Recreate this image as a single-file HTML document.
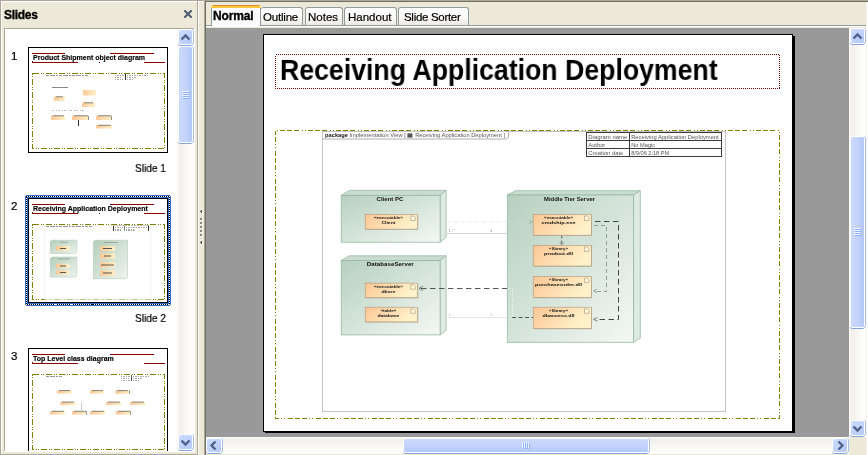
<!DOCTYPE html>
<html>
<head>
<meta charset="utf-8">
<title>Slides</title>
<style>
html,body{margin:0;padding:0;}
body{width:868px;height:455px;position:relative;overflow:hidden;background:#ece9d8;font-family:"Liberation Sans",sans-serif;color:#000;}
.a{position:absolute;}
.t,.tabtxt,.num,.slbl,svg{will-change:transform;}
.t{position:absolute;white-space:nowrap;line-height:1;}
/* scrollbar pieces */
.vtrack{position:absolute;background:linear-gradient(to right,#fefefb 0,#f3f1ec 2px,#f3f1ec 4px,#fefefb 15px,#fefefb 100%);}
.htrack{position:absolute;background:linear-gradient(to bottom,#fefefb 0,#f3f1ec 2px,#f3f1ec 4px,#fefefb 15px,#fefefb 100%);}
.sbtn{position:absolute;width:13px;height:14px;border:1px solid #fff;border-radius:3px;background:linear-gradient(135deg,#cfdcfd 0%,#c2d3fc 45%,#b4c8f7 100%);box-shadow:1px 0 0 #a9bfea,0 1px 0 #84a3da;}
.vthumb{position:absolute;width:13px;border:1px solid #fff;border-radius:3px;background:linear-gradient(to right,#cbd9fc 0%,#c3d3fc 50%,#b3c8f7 100%);box-shadow:1px 0 0 #a9bfea,0 1px 0 #84a3da;}
.hthumb{position:absolute;height:13px;border:1px solid #fff;border-radius:3px;background:linear-gradient(to bottom,#cbd9fc 0%,#c3d3fc 50%,#b3c8f7 100%);box-shadow:1px 0 0 #a9bfea,0 1px 0 #84a3da;}
.tab{position:absolute;top:7px;height:17px;border:1px solid #919b9c;border-bottom:none;border-radius:3px 3px 0 0;background:linear-gradient(to bottom,#ffffff 0%,#fbfbf8 50%,#ecebe5 100%);box-sizing:content-box;}
.tabtxt{position:absolute;white-space:nowrap;line-height:1;font-size:11.5px;top:12px;-webkit-text-stroke:0.2px #000;}
.thumb{position:absolute;width:138px;height:104px;border:1px solid #000;background:#fff;left:28px;}
.num{position:absolute;white-space:nowrap;line-height:1;font-size:11.5px;left:11px;-webkit-text-stroke:0.2px #000;}
.thtitle{font-size:7px;font-weight:bold;letter-spacing:0;-webkit-text-stroke:0.15px #000;}
.slbl{position:absolute;white-space:nowrap;line-height:1;font-size:11.5px;-webkit-text-stroke:0.2px #000;}
</style>
</head>
<body>

<!-- ===== outer frame lines ===== -->
<div class="a" style="left:0;top:0;width:868px;height:1px;background:#aca899"></div>
<div class="a" style="left:0;top:0;width:1px;height:455px;background:#aca899"></div>
<div class="a" style="left:1px;top:1px;width:196px;height:1px;background:#fff"></div>
<div class="a" style="left:1px;top:1px;width:1px;height:453px;background:#fff"></div>
<div class="a" style="left:0;top:454px;width:198px;height:1px;background:#aca899"></div>

<!-- ===== left panel title ===== -->
<div class="t" id="slidesTitle" style="left:4px;top:9px;font-size:12px;font-weight:bold;letter-spacing:-0.3px;-webkit-text-stroke:0.35px #000;">Slides</div>
<svg class="a" style="left:184px;top:10px" width="8" height="8" viewBox="0 0 8 8">
  <path d="M1 1 L7 7 M7 1 L1 7" stroke="#4f5b72" stroke-width="2" stroke-linecap="square" fill="none"/>
</svg>

<!-- ===== slide list box ===== -->
<div class="a" style="left:4px;top:28px;width:191px;height:424px;background:#fff"></div>
<div class="a" style="left:4px;top:28px;width:190px;height:1px;background:#aca899"></div>
<div class="a" style="left:4px;top:28px;width:1px;height:423px;background:#aca899"></div>

<!-- thumbnails -->
<svg class="a" id="leftsvg" style="left:0;top:0" width="177" height="451" viewBox="0 0 177 451">
<defs>
<linearGradient id="og" x1="0" y1="0" x2="1" y2="0"><stop offset="0" stop-color="#fdc896"/><stop offset="1" stop-color="#fff0c8"/></linearGradient>
<linearGradient id="gg" x1="0" y1="0" x2="1" y2="1"><stop offset="0" stop-color="#b4cdbb"/><stop offset="1" stop-color="#eef4ef"/></linearGradient>
</defs>
<rect x="28.5" y="47.5" width="139" height="105" fill="#fff" stroke="#000" shape-rendering="crispEdges"/>
<g stroke="#8b0000" stroke-width="1" shape-rendering="crispEdges"><path d="M32 53.5 H65 M110 53.5 H154 M32 62.5 H78 M144 62.5 H165 M32.5 60.5 V62.5 M99 62.5 H100"/></g>
<rect x="32.5" y="73.5" width="132" height="75" fill="none" stroke="#808000" stroke-dasharray="6 2 1 1 1 2" shape-rendering="crispEdges"/>
<g fill="none" shape-rendering="crispEdges"><path d="M125.5 74 V80" stroke="#333"/><path d="M115 75.5 H124 M127 75.5 H148 M115 77.5 H122 M127 77.5 H136 M115 79.5 H123 M127 79.5 H134" stroke="#aaa" stroke-dasharray="1 1 2 1"/></g>
<path d="M46 75.5 H88" stroke="#999" stroke-width="1" stroke-dasharray="3 1 5 1 2 1"/>
<rect x="83" y="90" width="13" height="5.5" fill="url(#og)"/>
<rect x="54" y="96.5" width="11" height="4.5" fill="url(#og)"/>
<rect x="82" y="102.5" width="13" height="4.5" fill="url(#og)"/>
<rect x="51" y="115.5" width="14" height="4.5" fill="url(#og)"/>
<rect x="72" y="115.5" width="17" height="4.5" fill="url(#og)"/>
<rect x="96" y="115.5" width="16" height="4.5" fill="url(#og)"/>
<rect x="96" y="125" width="16" height="3.5" fill="url(#og)"/>
<g stroke="#444" stroke-width="0.7"><path d="M52 87.5 H68 M53 115.8 H64 M74 115.8 H88 M98 115.8 H111 M98 125.3 H111 M56 96.8 H63 M84 102.8 H93" stroke="#555"/><path d="M78.5 120 V126" stroke="#333" stroke-width="1"/><path d="M88.5 116 V120 M111.5 116 V120" stroke="#666"/></g>
<path d="M52 110.5 H84" stroke="#bbb" stroke-width="1" stroke-dasharray="2 2 1 1"/>
<rect x="25.5" y="195.5" width="145" height="110" rx="2" fill="none" stroke="#316ac5" shape-rendering="crispEdges"/>
<rect x="26.5" y="196.5" width="143" height="108" fill="none" stroke="#000" shape-rendering="crispEdges"/>
<rect x="26.5" y="196.5" width="143" height="108" fill="none" stroke="#fff" stroke-dasharray="1 1" shape-rendering="crispEdges"/>
<rect x="27.5" y="197.5" width="141" height="106" fill="none" stroke="#316ac5" shape-rendering="crispEdges"/>
<rect x="28.5" y="198.5" width="139" height="104" fill="#fff" stroke="#000" shape-rendering="crispEdges"/>
<g stroke="#8b0000" stroke-width="1" shape-rendering="crispEdges"><path d="M32 204.5 H65 M110 204.5 H154 M32 213.5 H78 M144 213.5 H165 M32.5 211.5 V213.5 M99 213.5 H100"/></g>
<rect x="32.5" y="224.5" width="132" height="75" fill="none" stroke="#808000" stroke-dasharray="6 2 1 1 1 2" shape-rendering="crispEdges"/>
<g fill="none" shape-rendering="crispEdges"><path d="M113.5 225 V231 M148.5 225 V231" stroke="#333"/><path d="M124.5 225 V231" stroke="#888"/><path d="M113 225.5 H149" stroke="#777" stroke-dasharray="2 1"/><path d="M115 227.5 H123 M126 227.5 H147 M115 229.5 H121 M126 229.5 H134 M115 230.5 H122 M126 230.5 H136" stroke="#aaa" stroke-dasharray="1 1 2 1"/></g>
<path d="M46 226.5 H92" stroke="#999" stroke-width="1" stroke-dasharray="3 1 5 1 2 1"/>
<rect x="44.5" y="225.5" width="106.5" height="74" fill="none" stroke="#eee" stroke-width="0.6"/>
<path d="M50.3 241.5 L52.3 240.2 H76.8 V252.1 L74.8 253.4 H50.3 Z" fill="url(#gg)" stroke="#a9c3b1" stroke-width="0.5"/>
<path d="M50.3 258.3 L52.3 257 H76.8 V275.8 L74.8 277.1 H50.3 Z" fill="url(#gg)" stroke="#a9c3b1" stroke-width="0.5"/>
<path d="M93.4 241.5 L95.4 240.2 H127.6 V277.4 L125.6 278.7 H93.4 Z" fill="url(#gg)" stroke="#a9c3b1" stroke-width="0.5"/>
<rect x="56" y="246" width="13.7" height="4.6" fill="url(#og)"/>
<rect x="56" y="263.7" width="13.7" height="4.2" fill="url(#og)"/>
<rect x="56" y="270.2" width="13.7" height="4.2" fill="url(#og)"/>
<rect x="99.9" y="246" width="15.4" height="5" fill="url(#og)"/>
<rect x="99.9" y="253.4" width="15.4" height="5.4" fill="url(#og)"/>
<rect x="99.9" y="262" width="15.4" height="5.6" fill="url(#og)"/>
<rect x="99.9" y="270.2" width="15.4" height="5.6" fill="url(#og)"/>
<g stroke="#333" stroke-width="0.8"><path d="M60 248.5 H66 M60 266 H66 M60 272.5 H66 M103 248.5 H112 M104 256 H111 M101 265 H114 M103 273 H112"/></g>
<g stroke="#777" stroke-width="0.5"><path d="M60 242.3 H68 M58 259 H70 M104 242.5 H118"/></g>
<rect x="28.5" y="348.5" width="139" height="105" fill="#fff" stroke="#000" shape-rendering="crispEdges"/>
<g stroke="#8b0000" stroke-width="1" shape-rendering="crispEdges"><path d="M32 354.5 H65 M110 354.5 H154 M32 363.5 H78 M144 363.5 H165 M32.5 361.5 V363.5 M99 363.5 H100"/></g>
<rect x="32.5" y="374.5" width="132" height="75" fill="none" stroke="#808000" stroke-dasharray="6 2 1 1 1 2" shape-rendering="crispEdges"/>
<g fill="none" shape-rendering="crispEdges"><path d="M131.5 375 V381" stroke="#555"/><path d="M121 376.5 H130 M133 376.5 H149 M121 378.5 H129 M133 378.5 H142 M121 380.5 H130 M133 380.5 H140" stroke="#aaa" stroke-dasharray="1 1 2 1"/></g>
<path d="M46 376.5 H62" stroke="#999" stroke-width="1" stroke-dasharray="3 1 5 1 2 1"/>
<rect x="57.2" y="390.4" width="14.8" height="3.2" fill="url(#og)"/>
<rect x="90" y="390.4" width="14.5" height="3.2" fill="url(#og)"/>
<rect x="115.3" y="390.4" width="14.6" height="3.4" fill="url(#og)"/>
<rect x="60.4" y="401.9" width="15.3" height="3.2" fill="url(#og)"/>
<rect x="106.1" y="401.9" width="15" height="3.2" fill="url(#og)"/>
<rect x="129.9" y="401.9" width="15.4" height="3.2" fill="url(#og)"/>
<rect x="50" y="411.1" width="15" height="3.5" fill="url(#og)"/>
<rect x="72" y="411.1" width="14.7" height="3.5" fill="url(#og)"/>
<rect x="90" y="411.1" width="15.4" height="3.5" fill="url(#og)"/>
<rect x="115.8" y="411.1" width="15" height="3.5" fill="url(#og)"/>
<g stroke="#555" stroke-width="0.7"><path d="M59 390.6 H70 M92 390.6 H103 M117 390.6 H128 M62 402.1 H74 M108 402.1 H120 M132 402.1 H144 M52 411.3 H64 M74 411.3 H86 M92 411.3 H104 M118 411.3 H130"/><path d="M81.5 402 V412" stroke="#bbb"/><path d="M86.5 411 V415 M129.5 390 V394 M130.5 411 V415" stroke="#777"/></g>
</svg>
<div class="num" style="top:51px">1</div>
<div class="num" style="top:201px">2</div>
<div class="num" style="top:351px">3</div>
<div class="slbl" id="sl1" style="left:135px;top:163px;transform:scaleX(0.88);transform-origin:0 0">Slide 1</div>
<div class="slbl" id="sl2" style="left:135px;top:313px;transform:scaleX(0.88);transform-origin:0 0">Slide 2</div>
<div class="t thtitle" id="th1" style="left:32.5px;top:54px;">Product Shipment object diagram</div>
<div class="t thtitle" id="th2" style="left:32.5px;top:205px;">Receiving Application Deployment</div>
<div class="t thtitle" id="th3" style="left:32.5px;top:355px;">Top Level class diagram</div>

<!-- left scrollbar -->
<div class="vtrack" style="left:177px;top:29px;width:17px;height:422px"></div>
<div class="sbtn" style="left:178px;top:29px;"></div>
<div class="vthumb" style="left:178px;top:46px;height:95px"></div>
<div class="sbtn" style="left:178px;top:434px;"></div>
<svg class="a" style="left:177px;top:29px" width="17" height="422" viewBox="0 0 17 422">
  <path d="M4.5 10.5 L8.5 6.5 L12.5 10.5" stroke="#4d6185" stroke-width="2.3" fill="none"/>
  <path d="M4.5 411.5 L8.5 415.5 L12.5 411.5" stroke="#4d6185" stroke-width="2.3" fill="none"/>
  <g shape-rendering="crispEdges">
    <rect x="5" y="62" width="7" height="1" fill="#f0f4fe"/><rect x="6" y="63" width="7" height="1" fill="#8cb0f8"/>
    <rect x="5" y="64" width="7" height="1" fill="#f0f4fe"/><rect x="6" y="65" width="7" height="1" fill="#8cb0f8"/>
    <rect x="5" y="66" width="7" height="1" fill="#f0f4fe"/><rect x="6" y="67" width="7" height="1" fill="#8cb0f8"/>
    <rect x="5" y="68" width="7" height="1" fill="#f0f4fe"/><rect x="6" y="69" width="7" height="1" fill="#8cb0f8"/>
  </g>
</svg>

<!-- ===== splitter ===== -->
<div class="a" style="left:197px;top:1px;width:1px;height:454px;background:#aca899"></div>
<div class="a" style="left:198px;top:1px;width:1px;height:454px;background:#fff"></div>
<div class="a" style="left:198px;top:1px;width:6px;height:1px;background:#fff"></div>
<div class="a" style="left:204px;top:1px;width:1px;height:454px;background:#aca899"></div>
<div class="a" style="left:205px;top:1px;width:1px;height:454px;background:#716f64"></div>
<div class="a" style="left:205px;top:1px;width:663px;height:1px;background:#716f64"></div>

<svg class="a" style="left:199px;top:205px" width="5" height="44" viewBox="199 205 5 44" shape-rendering="crispEdges">
<rect x="201" y="219" width="2" height="2" fill="#fff"/><rect x="200" y="218" width="2" height="2" fill="#8a887b"/>
<rect x="201" y="223" width="2" height="2" fill="#fff"/><rect x="200" y="222" width="2" height="2" fill="#8a887b"/>
<rect x="201" y="227" width="2" height="2" fill="#fff"/><rect x="200" y="226" width="2" height="2" fill="#8a887b"/>
<rect x="201" y="231" width="2" height="2" fill="#fff"/><rect x="200" y="230" width="2" height="2" fill="#8a887b"/>
<rect x="201" y="235" width="2" height="2" fill="#fff"/><rect x="200" y="234" width="2" height="2" fill="#8a887b"/>
<rect x="202" y="211" width="1" height="3" fill="#fff"/><rect x="200" y="211" width="1" height="1" fill="#555"/><rect x="201" y="210" width="1" height="3" fill="#555"/>
<rect x="202" y="242" width="1" height="3" fill="#fff"/><rect x="200" y="242" width="1" height="1" fill="#555"/><rect x="201" y="241" width="1" height="3" fill="#555"/>
</svg>
<!-- ===== main: tab row lines ===== -->
<div class="a" style="left:206px;top:25px;width:660px;height:1px;background:#919b9c"></div>
<div class="a" style="left:206px;top:26px;width:660px;height:1px;background:#fff"></div>
<!-- workspace -->
<div class="a" style="left:206px;top:28px;width:643px;height:409px;background:#999999"></div>
<!-- right edge -->
<div class="a" style="left:866px;top:2px;width:1px;height:453px;background:#f6f4ec"></div>
<div class="a" style="left:867px;top:2px;width:1px;height:453px;background:#fff"></div>


<!-- ===== tabs ===== -->
<div class="a" id="tabNormal" style="left:211px;top:5px;width:50px;height:21px;background:#fcfcfe;border-radius:3px 3px 0 0;overflow:hidden">
  <div class="a" style="left:0;top:0;width:50px;height:1px;background:#e68b2c"></div>
  <div class="a" style="left:0;top:1px;width:50px;height:2px;background:#ffc73c"></div>
  <div class="a" style="left:0;top:3px;width:1px;height:18px;background:#919b9c"></div>
  <div class="a" style="left:49px;top:3px;width:1px;height:18px;background:#919b9c"></div>
</div>
<div class="tabtxt" id="tNormal" style="left:213px;top:10px;font-size:12px;font-weight:bold;letter-spacing:-0.15px;-webkit-text-stroke:0.35px #000;">Normal</div>
<div class="tab" style="left:261px;width:41px;border-left:none;"></div>
<div class="tabtxt" id="tOutline" style="left:262.5px;letter-spacing:-0.2px;">Outline</div>
<div class="tab" style="left:305px;width:36px;"></div>
<div class="tabtxt" id="tNotes" style="left:308px;">Notes</div>
<div class="tab" style="left:344px;width:51px;"></div>
<div class="tabtxt" id="tHandout" style="left:348px;">Handout</div>
<div class="tab" style="left:398px;width:69px;"></div>
<div class="tabtxt" id="tSorter" style="left:404px;letter-spacing:-0.3px;">Slide Sorter</div>

<!-- ===== slide page ===== -->
<div class="a" style="left:265px;top:36px;width:530px;height:397px;background:#000"></div>
<div class="a" style="left:263px;top:34px;width:530px;height:398px;background:#000"></div>
<div class="a" style="left:264px;top:35px;width:528px;height:396px;background:#fff"></div>

<!-- title -->
<div class="t" id="bigTitle" style="left:279.8px;top:56px;font-size:28px;font-weight:bold;transform:scale(0.9525,1.045);transform-origin:0 0;">Receiving Application Deployment</div>

<!-- main vector overlay -->
<svg class="a" id="mainsvg" style="left:0;top:0" width="868" height="455" viewBox="0 0 868 455">
  <g shape-rendering="crispEdges" fill="none">
    <rect x="275.5" y="54.5" width="504" height="34" stroke="#800000" stroke-dasharray="1 1"/>
    <rect x="275.5" y="130.5" width="504" height="288" stroke="#808000" stroke-dasharray="5 2 5 2 5 3 1 2 1 2" stroke-dashoffset="23.5"/>
    <rect x="322.5" y="131.5" width="403" height="280" stroke="#c4c4c4"/>
  </g>
<g id="diagram">
<defs>
<linearGradient id="ng" x1="0" y1="0" x2="1" y2="1"><stop offset="0" stop-color="#b7d0be"/><stop offset="0.45" stop-color="#d2e2d7"/><stop offset="1" stop-color="#f4f8f5"/></linearGradient>
<linearGradient id="ag" x1="0" y1="0" x2="1" y2="0.35"><stop offset="0" stop-color="#fdc693"/><stop offset="1" stop-color="#fff2cb"/></linearGradient>
</defs>
<path d="M322.5 139 H506.5 L508.5 137 V131.5" fill="none" stroke="#999" stroke-width="0.8"/>
<text x="325" y="137.2" font-size="5.6" fill="#555" textLength="180" lengthAdjust="spacingAndGlyphs"><tspan font-weight="bold" fill="#111">package</tspan> Implementation View [ <tspan fill="#000">&#9638;</tspan> Receiving Application Deployment ]</text>
<g fill="none" stroke="#3a3a3a" stroke-width="1" shape-rendering="crispEdges"><rect x="586.5" y="132.5" width="135" height="24"/><path d="M586.5 140.5 H721.5 M586.5 148.5 H721.5 M629.5 132.5 V156.5"/></g>
<g font-size="5.5" fill="#555"><text x="588.3" y="138.5" textLength="39" lengthAdjust="spacingAndGlyphs">Diagram name</text><text x="631.2" y="138.5" textLength="87.5" lengthAdjust="spacingAndGlyphs">Receiving Application Deployment</text><text x="588.3" y="146.5" textLength="17" lengthAdjust="spacingAndGlyphs">Author</text><text x="631.2" y="146.5" textLength="24" lengthAdjust="spacingAndGlyphs">No Magic</text><text x="588.3" y="154.5" textLength="35" lengthAdjust="spacingAndGlyphs">Creation date</text><text x="631.2" y="154.5" textLength="38" lengthAdjust="spacingAndGlyphs">8/9/06 2:18 PM</text></g>
<path d="M341.2 195.4 L349.2 190.4 H446.1 L440.1 195.4 Z" fill="#c9dccf" stroke="#98b8a4" stroke-width="0.8"/><path d="M440.1 195.4 L446.1 190.4 V237.2 L440.1 242.2 Z" fill="#dfebe2" stroke="#98b8a4" stroke-width="0.8"/><rect x="341.2" y="195.4" width="98.9" height="46.8" fill="url(#ng)" stroke="#98b8a4" stroke-width="0.8"/>
<path d="M341.2 260.5 L349.2 255.8 H446.1 L440.1 260.5 Z" fill="#c9dccf" stroke="#98b8a4" stroke-width="0.8"/><path d="M440.1 260.5 L446.1 255.8 V330.2 L440.1 334.9 Z" fill="#dfebe2" stroke="#98b8a4" stroke-width="0.8"/><rect x="341.2" y="260.5" width="98.9" height="74.4" fill="url(#ng)" stroke="#98b8a4" stroke-width="0.8"/>
<path d="M507.3 195 L516.0 190.7 H640.3 L633.6 195 Z" fill="#c9dccf" stroke="#98b8a4" stroke-width="0.8"/><path d="M633.6 195 L640.3 190.7 V338.0 L633.6 342.3 Z" fill="#dfebe2" stroke="#98b8a4" stroke-width="0.8"/><rect x="507.3" y="195" width="126.3" height="147.3" fill="url(#ng)" stroke="#98b8a4" stroke-width="0.8"/>
<text x="376.5" y="200.8" font-size="5.4" textLength="27" lengthAdjust="spacingAndGlyphs" fill="#111" font-weight="bold">Client PC</text>
<text x="366.8" y="266" font-size="5.6" textLength="47" lengthAdjust="spacingAndGlyphs" fill="#111" font-weight="bold">DatabaseServer</text>
<text x="544.0" y="201" font-size="5.4" textLength="51" lengthAdjust="spacingAndGlyphs" fill="#111" font-weight="bold">Middle Tier Server</text>
<g fill="none" stroke-width="1"><path d="M446.5 233.5 H507" stroke="#d4d4d4"/><path d="M446.5 317.5 H507" stroke="#e6e6e6"/><path d="M418 222 H440 M507.5 222 H532" stroke="#fff" stroke-opacity="0.22" stroke-dasharray="4 3"/><path d="M447 222 H507" stroke="#eeeeee" stroke-dasharray="4 3"/><path d="M421 288.5 H507.5" stroke="#555" stroke-dasharray="5.5 3.5"/><path d="M507.5 288.5 H512.5 V317.5" stroke="#fff" stroke-opacity="0.5" stroke-dasharray="3 2"/><path d="M512 317.5 H533" stroke="#555" stroke-dasharray="4 2.5"/><path d="M595 221.5 H618.5 V319.5 H596" stroke="#444" stroke-dasharray="5.5 3.5"/><path d="M594 225.5 H606.5 V291.5 H596" stroke="#999" stroke-dasharray="4 3"/><path d="M561.7 235.5 V244" stroke="#666" stroke-dasharray="3 2"/></g>
<g fill="none" stroke="#555" stroke-width="0.7"><path d="M423 286.3 L419 288.4 L423 290.5"/><path d="M597.5 317.5 L593.5 319.3 L597.5 321.1"/><path d="M597 289.3 L593.5 291 L597 292.7" stroke="#888"/><path d="M559.8 242 L561.7 245 L563.6 242" stroke="#777"/><path d="M529 220.5 L532.5 222 L529 223.5" stroke="#9a9"/></g>
<g font-size="4" fill="#888"><text x="448.5" y="232">1..*</text><text x="490" y="232">1</text><text x="448.5" y="316" fill="#bbb">1</text><text x="490" y="316" fill="#bbb">1</text></g>
<rect x="365.9" y="215.1" width="52.4" height="14.7" fill="#a89880" opacity="0.6"/><rect x="365.2" y="214.4" width="52.4" height="14.7" fill="url(#ag)" stroke="#ab957c" stroke-width="0.6"/><path d="M410.8 216.0 h3 l1.5 1.5 v3 h-4.5 Z" fill="#fff6d8" stroke="#8f8570" stroke-width="0.5"/>
<text x="373.9" y="219.0" font-size="4.2" textLength="29" lengthAdjust="spacingAndGlyphs" fill="#1a1a1a" font-weight="bold">&#171;executable&#187;</text>
<text x="381.4" y="224.0" font-size="4.2" textLength="14" lengthAdjust="spacingAndGlyphs" fill="#111" font-weight="bold">Client</text>
<rect x="365.9" y="283.8" width="52.4" height="14.6" fill="#a89880" opacity="0.6"/><rect x="365.2" y="283.1" width="52.4" height="14.6" fill="url(#ag)" stroke="#ab957c" stroke-width="0.6"/><path d="M410.8 284.7 h3 l1.5 1.5 v3 h-4.5 Z" fill="#fff6d8" stroke="#8f8570" stroke-width="0.5"/>
<text x="373.9" y="287.7" font-size="4.2" textLength="29" lengthAdjust="spacingAndGlyphs" fill="#1a1a1a" font-weight="bold">&#171;executable&#187;</text>
<text x="381.4" y="292.7" font-size="4.2" textLength="14" lengthAdjust="spacingAndGlyphs" fill="#111" font-weight="bold">dbsrv</text>
<rect x="365.9" y="307.9" width="52.4" height="14.7" fill="#a89880" opacity="0.6"/><rect x="365.2" y="307.2" width="52.4" height="14.7" fill="url(#ag)" stroke="#ab957c" stroke-width="0.6"/><path d="M410.8 308.8 h3 l1.5 1.5 v3 h-4.5 Z" fill="#fff6d8" stroke="#8f8570" stroke-width="0.5"/>
<text x="380.4" y="311.8" font-size="4.2" textLength="16" lengthAdjust="spacingAndGlyphs" fill="#1a1a1a" font-weight="bold">&#171;table&#187;</text>
<text x="377.4" y="316.8" font-size="4.2" textLength="22" lengthAdjust="spacingAndGlyphs" fill="#111" font-weight="bold">database</text>
<rect x="533.9" y="215.1" width="58.1" height="20.8" fill="#a89880" opacity="0.6"/><rect x="533.2" y="214.4" width="58.1" height="20.8" fill="url(#ag)" stroke="#ab957c" stroke-width="0.6"/><path d="M584.5 216.0 h3 l1.5 1.5 v3 h-4.5 Z" fill="#fff6d8" stroke="#8f8570" stroke-width="0.5"/>
<text x="544.1" y="219.0" font-size="4.2" textLength="29" lengthAdjust="spacingAndGlyphs" fill="#1a1a1a" font-weight="bold">&#171;executable&#187;</text>
<text x="541.6" y="224.0" font-size="4.4" textLength="34" lengthAdjust="spacingAndGlyphs" fill="#111" font-weight="bold">cmdship.exe</text>
<rect x="533.9" y="246.0" width="58.1" height="20.7" fill="#a89880" opacity="0.6"/><rect x="533.2" y="245.3" width="58.1" height="20.7" fill="url(#ag)" stroke="#ab957c" stroke-width="0.6"/><path d="M584.5 246.9 h3 l1.5 1.5 v3 h-4.5 Z" fill="#fff6d8" stroke="#8f8570" stroke-width="0.5"/>
<text x="549.1" y="249.9" font-size="4.2" textLength="19" lengthAdjust="spacingAndGlyphs" fill="#1a1a1a" font-weight="bold">&#171;library&#187;</text>
<text x="544.1" y="254.9" font-size="4.4" textLength="29" lengthAdjust="spacingAndGlyphs" fill="#111" font-weight="bold">product.dll</text>
<rect x="533.9" y="277.2" width="58.1" height="21.0" fill="#a89880" opacity="0.6"/><rect x="533.2" y="276.5" width="58.1" height="21.0" fill="url(#ag)" stroke="#ab957c" stroke-width="0.6"/><path d="M584.5 278.1 h3 l1.5 1.5 v3 h-4.5 Z" fill="#fff6d8" stroke="#8f8570" stroke-width="0.5"/>
<text x="549.1" y="281.1" font-size="4.2" textLength="19" lengthAdjust="spacingAndGlyphs" fill="#1a1a1a" font-weight="bold">&#171;library&#187;</text>
<text x="535.1" y="286.1" font-size="4.4" textLength="47" lengthAdjust="spacingAndGlyphs" fill="#111" font-weight="bold">purchaseorder.dll</text>
<rect x="533.9" y="307.9" width="58.1" height="21.3" fill="#a89880" opacity="0.6"/><rect x="533.2" y="307.2" width="58.1" height="21.3" fill="url(#ag)" stroke="#ab957c" stroke-width="0.6"/><path d="M584.5 308.8 h3 l1.5 1.5 v3 h-4.5 Z" fill="#fff6d8" stroke="#8f8570" stroke-width="0.5"/>
<text x="549.1" y="311.8" font-size="4.2" textLength="19" lengthAdjust="spacingAndGlyphs" fill="#1a1a1a" font-weight="bold">&#171;library&#187;</text>
<text x="542.6" y="316.8" font-size="4.4" textLength="32" lengthAdjust="spacingAndGlyphs" fill="#111" font-weight="bold">dbaccess.dll</text>
</g>
</svg>

<!-- ===== main vertical scrollbar ===== -->
<div class="vtrack" style="left:849px;top:28px;width:17px;height:409px"></div>
<div class="sbtn" style="left:850px;top:28px;"></div>
<div class="vthumb" style="left:850px;top:136px;height:190px"></div>
<div class="sbtn" style="left:850px;top:420px;"></div>
<svg class="a" style="left:849px;top:28px" width="17" height="409" viewBox="0 0 17 409">
  <path d="M4.5 10.5 L8.5 6.5 L12.5 10.5" stroke="#4d6185" stroke-width="2.3" fill="none"/>
  <path d="M4.5 398.5 L8.5 402.5 L12.5 398.5" stroke="#4d6185" stroke-width="2.3" fill="none"/>
  <g shape-rendering="crispEdges">
    <rect x="5" y="200" width="7" height="1" fill="#f0f4fe"/><rect x="6" y="201" width="7" height="1" fill="#8cb0f8"/>
    <rect x="5" y="202" width="7" height="1" fill="#f0f4fe"/><rect x="6" y="203" width="7" height="1" fill="#8cb0f8"/>
    <rect x="5" y="204" width="7" height="1" fill="#f0f4fe"/><rect x="6" y="205" width="7" height="1" fill="#8cb0f8"/>
    <rect x="5" y="206" width="7" height="1" fill="#f0f4fe"/><rect x="6" y="207" width="7" height="1" fill="#8cb0f8"/>
  </g>
</svg>

<!-- ===== main horizontal scrollbar ===== -->
<div class="htrack" style="left:206px;top:437px;width:643px;height:17px"></div>
<div class="sbtn" style="left:206px;top:438px;width:14px;height:13px"></div>
<div class="hthumb" style="left:403px;top:438px;width:244px"></div>
<div class="sbtn" style="left:832px;top:438px;width:14px;height:13px"></div>
<svg class="a" style="left:206px;top:437px" width="643" height="17" viewBox="0 0 643 17">
  <path d="M9.5 4.5 L5.5 8.5 L9.5 12.5" stroke="#4d6185" stroke-width="2.3" fill="none"/>
  <path d="M632.5 4.5 L636.5 8.5 L632.5 12.5" stroke="#4d6185" stroke-width="2.3" fill="none"/>
  <g shape-rendering="crispEdges">
    <rect x="316" y="5" width="1" height="6" fill="#f0f4fe"/><rect x="317" y="6" width="1" height="6" fill="#8cb0f8"/>
    <rect x="318" y="5" width="1" height="6" fill="#f0f4fe"/><rect x="319" y="6" width="1" height="6" fill="#8cb0f8"/>
    <rect x="320" y="5" width="1" height="6" fill="#f0f4fe"/><rect x="321" y="6" width="1" height="6" fill="#8cb0f8"/>
    <rect x="322" y="5" width="1" height="6" fill="#f0f4fe"/><rect x="323" y="6" width="1" height="6" fill="#8cb0f8"/>
  </g>
</svg>

</body>
</html>
